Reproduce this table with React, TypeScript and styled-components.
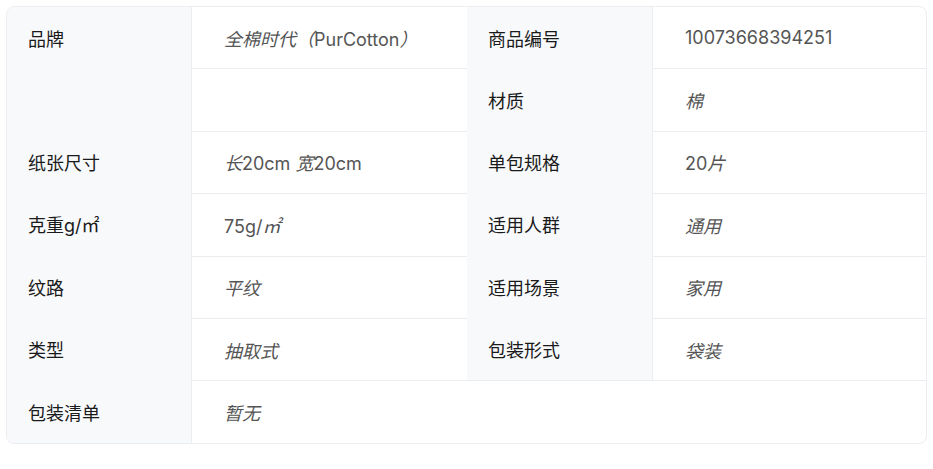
import React from "react";
import styled, { createGlobalStyle } from "styled-components";

const GlobalStyle = createGlobalStyle`
  html, body {
    margin: 0;
    padding: 0;
    background: #ffffff;
  }
  body {
    padding: 6px;
    font-family: "Inter", "Noto Sans CJK SC", sans-serif;
  }
  * { box-sizing: border-box; }
`;

const Card = styled.div`
  border: 1px solid #ebedf0;
  border-radius: 8px;
  overflow: hidden;
  background: #ffffff;
`;

const Grid = styled.div`
  display: grid;
  grid-template-columns: 185px 275px 186px 1fr;
  grid-template-rows: 61.4px repeat(6, 62.4px);
`;

const LabelCell = styled.div`
  display: flex;
  align-items: center;
  padding-left: 21px;
  background: #f8f9fb;
  border-right: 1px solid #ebedf0;
  font-family: "Inter", "Noto Sans CJK SC", sans-serif;
  font-size: 18px;
  font-weight: 400;
  color: #1a1a1a;
`;

const ValueCell = styled.div<{ $first?: boolean }>`
  display: flex;
  align-items: center;
  padding-left: 32px;
  border-top: ${(p) => (p.$first ? "none" : "1px solid #ebedf0")};
  font-family: "Inter", "Noto Sans CJK SC", sans-serif;
  font-size: 18px;
  font-weight: 400;
  color: #555555;
  white-space: pre;
`;

const ValueText = styled.span`
  display: inline;
`;

const EmptyCell = styled.div`
  grid-column: span 2;
  border-top: 1px solid #ebedf0;
`;

const Cjk = styled.span`
  font-style: italic;
`;

type Pair = [string, string];
type Row = { left: Pair; right: Pair | null };

const rows: Row[] = [
  { left: ["品牌", "全棉时代（PurCotton）"], right: ["商品编号", "10073668394251"] },
  { left: ["", ""], right: ["材质", "棉"] },
  { left: ["纸张尺寸", "长20cm 宽20cm"], right: ["单包规格", "20片"] },
  { left: ["克重g/㎡", "75g/㎡"], right: ["适用人群", "通用"] },
  { left: ["纹路", "平纹"], right: ["适用场景", "家用"] },
  { left: ["类型", "抽取式"], right: ["包装形式", "袋装"] },
  { left: ["包装清单", "暂无"], right: null },
];

const cjkRe = /([\u3000-\u9fff\uff00-\uffef]+)/;

function renderValue(text: string) {
  return (
    <ValueText>
      {text
        .split(cjkRe)
        .filter((s) => s.length > 0)
        .map((part, i) =>
          cjkRe.test(part) ? <Cjk key={i}>{part}</Cjk> : <React.Fragment key={i}>{part}</React.Fragment>
        )}
    </ValueText>
  );
}

export default function App() {
  return (
    <>
      <GlobalStyle />
      <Card>
        <Grid>
          {rows.map((row, i) => (
            <React.Fragment key={i}>
              <LabelCell>{row.left[0]}</LabelCell>
              <ValueCell $first={i === 0}>{renderValue(row.left[1])}</ValueCell>
              {row.right ? (
                <>
                  <LabelCell>{row.right[0]}</LabelCell>
                  <ValueCell $first={i === 0}>{renderValue(row.right[1])}</ValueCell>
                </>
              ) : (
                <EmptyCell />
              )}
            </React.Fragment>
          ))}
        </Grid>
      </Card>
    </>
  );
}
